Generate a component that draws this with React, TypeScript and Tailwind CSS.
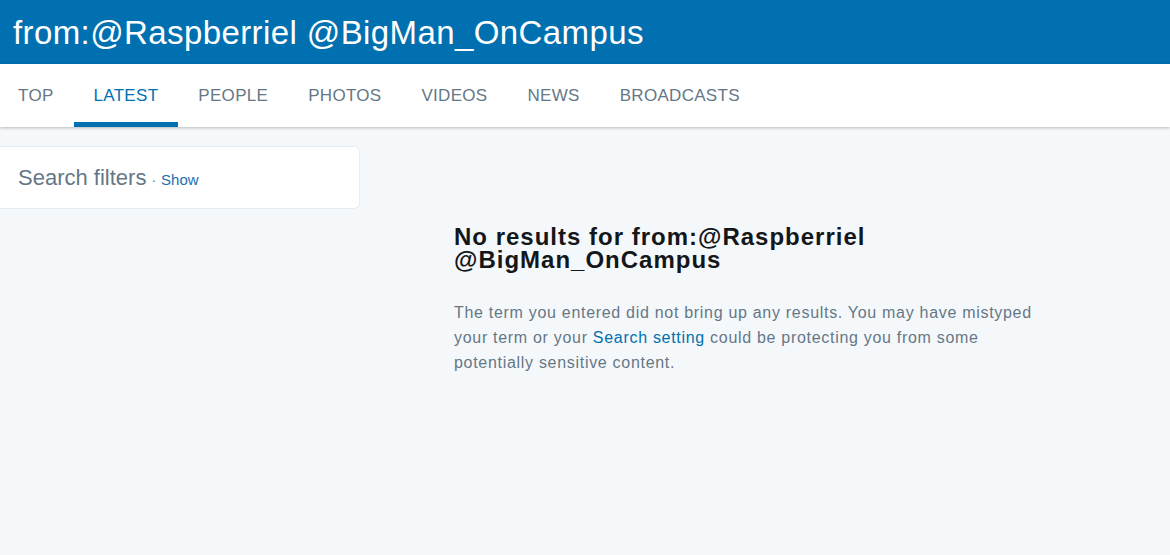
export default function App() {
  const tabs = ['TOP', 'LATEST', 'PEOPLE', 'PHOTOS', 'VIDEOS', 'NEWS', 'BROADCASTS']
  const active = 'LATEST'

  return (
    <div className="min-h-[555px] bg-[#f5f8fa] font-['Liberation_Sans',Arial,sans-serif]">
      {/* Header */}
      <div className="flex h-[64px] items-center bg-[#0070b0] pl-[13px]">
        <h1 className="text-[33px] leading-none tracking-[0.4px] text-white">
          from:@Raspberriel @BigMan_OnCampus
        </h1>
      </div>

      {/* Tabs */}
      <nav className="flex h-[63px] bg-white shadow-[0_1px_3px_rgba(0,0,0,0.25)]">
        <ul className="-ml-[2px] flex">
          {tabs.map((tab) => (
            <li
              key={tab}
              className={`flex h-full items-center border-b-[5px] px-[20px] pt-[5px] text-[17px] tracking-[0.3px] ${
                tab === active
                  ? 'border-[#0070b0] text-[#0070b0]'
                  : 'border-transparent text-[#657786]'
              }`}
            >
              {tab}
            </li>
          ))}
        </ul>
      </nav>

      <div className="flex pt-[19px]">
        {/* Sidebar */}
        <div className="w-[360px] shrink-0">
          <div className="flex h-[63px] items-center rounded-r-[6px] border border-l-0 border-[#e6ecf0] bg-white pl-[18px]">
            <span className="text-[22px] text-[#657786]">Search filters</span>
            <span className="ml-[5px] mt-[6px] text-[14px] text-[#657786]">·</span>
            <a className="ml-[5px] mt-[6px] text-[15px] text-[#1b6fb0]">Show</a>
          </div>
        </div>

        {/* Empty state */}
        <div className="ml-[94px] w-[600px] pt-[79px]">
          <h2 className="text-[24px] font-bold leading-[23px] tracking-[1px] text-[#14171a]">
            No results for from:@Raspberriel
            <br />
            @BigMan_OnCampus
          </h2>
          <p className="mt-[29px] w-[590px] text-[16px] leading-[25px] tracking-[0.7px] text-[#657786]">
            The term you entered did not bring up any results. You may have mistyped your term or
            your <a className="text-[#0070b0]">Search setting</a> could be protecting you from some
            potentially sensitive content.
          </p>
        </div>
      </div>
    </div>
  )
}
